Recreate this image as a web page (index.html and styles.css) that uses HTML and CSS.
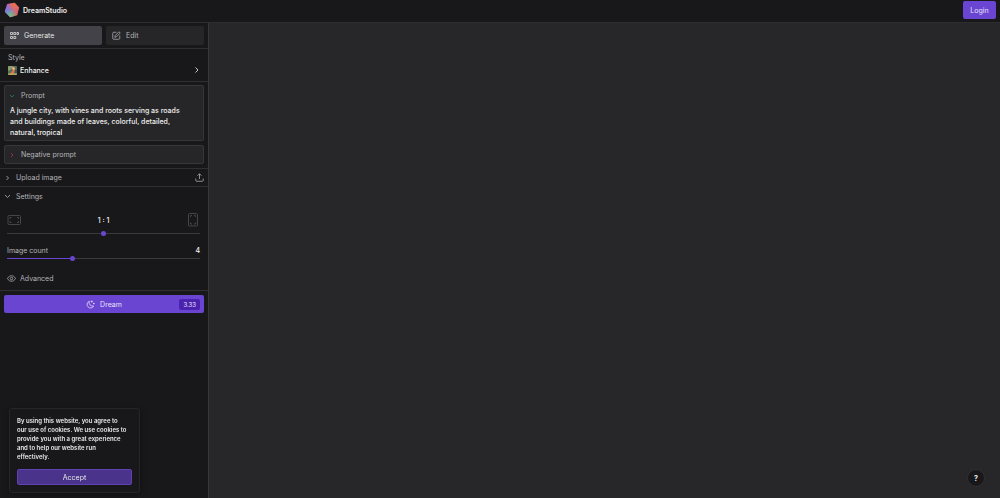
FILE: index.html
```html
<!DOCTYPE html>
<html lang="en">
<head>
    <meta charset="UTF-8">
    <meta name="viewport" content="width=device-width, initial-scale=1.0">
    <title>DreamStudio</title>
    <link rel="stylesheet" href="styles.css">
</head>
<body>
    <header class="topbar">
        <a class="brand" href="#">
            <svg class="logo" viewBox="0 0 16 16">
                <defs>
                    <linearGradient id="logo-base" x1="0" y1="0" x2="1" y2="1">
                        <stop offset="0" stop-color="#b45fc0"/>
                        <stop offset="0.5" stop-color="#c9698f"/>
                        <stop offset="1" stop-color="#f0503c"/>
                    </linearGradient>
                    <radialGradient id="logo-blue" cx="0.15" cy="0.6" r="0.6">
                        <stop offset="0" stop-color="#6f7be8"/>
                        <stop offset="1" stop-color="#6f7be8" stop-opacity="0"/>
                    </radialGradient>
                    <radialGradient id="logo-green" cx="0.4" cy="0.9" r="0.5">
                        <stop offset="0" stop-color="#6cc08a"/>
                        <stop offset="1" stop-color="#6cc08a" stop-opacity="0"/>
                    </radialGradient>
                    <radialGradient id="logo-orange" cx="0.7" cy="0.1" r="0.5">
                        <stop offset="0" stop-color="#f4703c"/>
                        <stop offset="1" stop-color="#f4703c" stop-opacity="0"/>
                    </radialGradient>
                </defs>
                <path d="M3.2 2 L10.5 .7 L15.2 5.6 L13.3 13.2 L6.2 15.3 L.8 9.8 Z" fill="url(#logo-base)"/>
                <path d="M3.2 2 L10.5 .7 L15.2 5.6 L13.3 13.2 L6.2 15.3 L.8 9.8 Z" fill="url(#logo-blue)"/>
                <path d="M3.2 2 L10.5 .7 L15.2 5.6 L13.3 13.2 L6.2 15.3 L.8 9.8 Z" fill="url(#logo-green)"/>
                <path d="M3.2 2 L10.5 .7 L15.2 5.6 L13.3 13.2 L6.2 15.3 L.8 9.8 Z" fill="url(#logo-orange)"/>
            </svg>
            DreamStudio
        </a>
        <button class="login" type="button">Login</button>
    </header>

    <div class="layout">
        <aside class="sidebar">
            <nav class="tabs">
                <button class="tab active" type="button">
                    <svg class="icon" viewBox="0 0 18 18">
                        <path d="M1 3h4v4H1zM7.500 3h4v4h-4zM1 11h4v4H1zM7.500 11h4v4h-4zM14 3h3v4h-3z"/>
                    </svg>
                    Generate
                </button>
                <button class="tab" type="button">
                    <svg class="icon" viewBox="0 0 18 18">
                        <path d="M9 2.5H3.5a2 2 0 0 0-2 2v10a2 2 0 0 0 2 2h10a2 2 0 0 0 2-2V9M14 1.5l2.500 2.500-7.500 7.500-3.500 1 1-3.500z"/>
                    </svg>
                    Edit
                </button>
            </nav>

            <section class="style-picker">
                <span class="caption" id="style-label">Style</span>
                <button class="style-button" type="button" aria-describedby="style-label">
                    <svg class="thumb" viewBox="0 0 18 18">
                        <rect width="18" height="18" rx="2" fill="#53705a"/>
                        <path d="M0 2a2 2 0 0 1 2-2h9L6 7 0 10z" fill="#8c9a72"/>
                        <path d="M9 2c5 0 6 3 5 7l-2 5-7 2c0-4 4-5 4-8z" fill="#e0713a"/>
                        <path d="M9 3h4v4H9z" fill="#f0d3ae"/>
                        <path d="M14 7h4v7h-5z" fill="#35526a"/>
                        <path d="M0 15l8-1 10 1v1a2 2 0 0 1-2 2H2a2 2 0 0 1-2-2z" fill="#b9a05a"/>
                    </svg>
                    Enhance
                    <svg class="chevron end" viewBox="0 0 8 8"><path d="M2.500 1.500L5 4 2.500 6.500"/></svg>
                </button>
            </section>

            <section class="prompts">
                <div class="prompt-box">
                    <label class="prompt-head" for="prompt">
                        <svg class="chevron green" viewBox="0 0 8 8"><path d="M1 3l2 2 2-2"/></svg>
                        Prompt
                    </label>
                    <textarea id="prompt" rows="3">A jungle city, with vines and roots serving as roads and buildings made of leaves, colorful, detailed, natural, tropical</textarea>
                </div>
                <button class="prompt-box prompt-head" type="button">
                    <svg class="chevron red" viewBox="0 0 8 8"><path d="M2 2l2 2-2 2"/></svg>
                    Negative prompt
                </button>
            </section>

            <button class="row upload" type="button">
                <svg class="chevron" viewBox="0 0 8 8"><path d="M2.500 2l2 2-2 2"/></svg>
                Upload image
                <svg class="icon end" viewBox="0 0 18 18">
                    <path d="M1.500 11v3.500a2 2 0 0 0 2 2h11a2 2 0 0 0 2-2V11M9 12V1.500M5 5.500l4-4 4 4"/>
                </svg>
            </button>

            <section class="settings">
                <button class="row" type="button">
                    <svg class="chevron" viewBox="0 0 8 8"><path d="M1 3l2.500 2.500L6 3"/></svg>
                    Settings
                </button>
                <div class="field ratio">
                    <label class="field-head" for="ratio">
                        <svg class="frame" viewBox="0 0 14 14">
                            <rect x="1" y="2.500" width="12.500" height="9" rx="1"/>
                            <path d="M3 6V4.500H4.500M10 4.500H11.500V6M11.500 8v1.500H10M4.500 9.500H3V8"/>
                        </svg>
                        <span class="value">1 : 1</span>
                        <svg class="frame" viewBox="0 0 14 14">
                            <rect x="2.500" y="0.500" width="9" height="12.500" rx="1"/>
                            <path d="M4.500 4V2.500H6M8 2.500h1.500V4M9.500 9.500V11H8M6 11H4.500V9.500"/>
                        </svg>
                    </label>
                    <input class="slider" id="ratio" type="range" min="0" max="100" value="50">
                </div>
                <div class="field">
                    <label class="field-head" for="count">Image count <span class="value">4</span></label>
                    <input class="slider filled" id="count" type="range" min="1" max="10" value="4">
                </div>
                <button class="row advanced" type="button">
                    <svg class="icon" viewBox="0 0 18 18">
                        <path d="M1 9c2-4 5-5.500 8-5.500S15 5 17 9c-2 4-5 5.500-8 5.500S3 13 1 9z"/>
                        <circle cx="9" cy="9" r="2.500"/>
                    </svg>
                    Advanced
                </button>
            </section>

            <div class="action">
                <button class="dream" type="button">
                    <svg class="icon" viewBox="0 0 18 18">
                        <path d="M6.500 2.500a7 7 0 1 0 9 9.500A7.500 7.500 0 0 1 6.500 2.500zM11.500 1v4M9.500 3h4M15.500 5.500v3M14 7h3"/>
                    </svg>
                    Dream
                    <span class="cost">3.33</span>
                </button>
            </div>
        </aside>

        <main class="canvas"></main>
    </div>

    <div class="cookies">
        <p>By using this website, you agree to our use of cookies. We use cookies to provide you with a great experience and to help our website run effectively.</p>
        <button class="accept" type="button">Accept</button>
    </div>

    <button class="help" type="button">?</button>
</body>
</html>
```
FILE: styles.css
```css
* {
    box-sizing: border-box;
}
body {
    display: flex;
    flex-direction: column;
    min-height: 100vh;
    margin: 0;
    background: #18181a;
    color: #b4b4b8;
    font-family: Inter, sans-serif;
    font-size: 7px;
    line-height: 11px;
}
button,
textarea {
    font: inherit;
    color: inherit;
    background: none;
    border: 0;
    margin: 0;
    padding: 0;
}
button {
    cursor: pointer;
}
svg {
    display: block;
    flex: none;
    fill: none;
    stroke: currentColor;
}
.icon {
    width: 9px;
    height: 9px;
    stroke-width: 1.5;
}
.chevron {
    width: 8px;
    height: 8px;
    stroke-width: 0.8;
}
.end {
    margin-left: auto;
}

/* header */
.topbar {
    display: flex;
    align-items: center;
    justify-content: space-between;
    height: 23px;
    padding: 0 4px 2px;
    border-bottom: 1px solid #2e2e31;
}
.brand {
    display: flex;
    align-items: center;
    gap: 3px;
    color: #f0f0f0;
    font-weight: 600;
    text-decoration: none;
}
.logo {
    width: 16px;
    height: 16px;
    stroke: none;
}
.login {
    min-width: 33px;
    height: 18px;
    border-radius: 2px;
    background: #6a45d2;
    color: #e8e2fa;
}

/* sidebar */
.layout {
    display: flex;
    flex: 1;
}
.sidebar {
    width: 209px;
    border-right: 1px solid #37373a;
}
.canvas {
    flex: 1;
    background: #272729;
}
.tabs {
    display: flex;
    gap: 4px;
    padding: 3px 4px;
    border-bottom: 1px solid #303033;
}
.tab {
    display: flex;
    flex: 1;
    align-items: center;
    gap: 5px;
    height: 19px;
    padding: 0 6px;
    border-radius: 2px;
    background: #262628;
}
.tab.active {
    background: #424248;
    color: #e4e4e6;
}
.style-picker {
    padding: 3px 7px 4px 8px;
    border-bottom: 1px solid #303033;
}
.caption {
    display: block;
}
.style-button {
    display: flex;
    align-items: center;
    gap: 3px;
    width: 100%;
    height: 14px;
    color: #f4f4f4;
    font-weight: 500;
}
.thumb {
    width: 9px;
    height: 9px;
    stroke: none;
}
.prompts {
    display: flex;
    flex-direction: column;
    gap: 4px;
    padding: 3px 4px 4px;
    border-bottom: 1px solid #303033;
}
.prompt-box {
    border: 1px solid #37373a;
    border-radius: 2px;
    background: #262628;
}
.prompt-head {
    display: flex;
    align-items: center;
    gap: 4px;
    height: 19px;
    padding: 0 4px;
}
.prompt-box textarea {
    display: block;
    width: 100%;
    padding: 0 12px 0 5px;
    margin-bottom: 2px;
    color: #f0f0f0;
    font-weight: 500;
    resize: none;
    overflow: hidden;
}
.green {
    color: #1f8a55;
}
.red {
    color: #a33a44;
}

.row {
    display: flex;
    align-items: center;
    gap: 4px;
    width: 100%;
    height: 18px;
    padding: 0 4px;
}
.upload {
    border-bottom: 1px solid #303033;
}
.settings {
    padding-bottom: 3px;
    border-bottom: 1px solid #303033;
}
.field {
    padding: 5px 8px 0 7px;
}
.field-head {
    display: flex;
    align-items: center;
    justify-content: space-between;
}
.value {
    color: #f4f4f4;
    font-weight: 500;
}
.frame {
    width: 14px;
    height: 14px;
    color: #454549;
}
.slider {
    display: block;
    width: 100%;
    height: 5px;
    margin: 0;
    appearance: none;
    background: linear-gradient(#3a3a3d, #3a3a3d) center / 100% 1px no-repeat;
}
.slider::-webkit-slider-thumb {
    appearance: none;
    width: 5px;
    height: 5px;
    border-radius: 50%;
    background: #6a45d2;
}
.slider.filled {
    background: linear-gradient(90deg, #6a45d2 34%, #3a3a3d 34%) center / 100% 1px no-repeat;
}
.ratio {
    padding-top: 8px;
}
.ratio .field-head {
    padding-bottom: 4px;
}
.ratio + .field {
    padding-top: 9px;
}
.advanced {
    margin-top: 8px;
    padding: 0 7px;
}
.action {
    padding: 4px;
}
.dream {
    display: flex;
    align-items: center;
    justify-content: center;
    gap: 5px;
    position: relative;
    width: 100%;
    height: 18px;
    border-radius: 2px;
    background: #6a45d2;
    color: #e8e2fa;
}
.cost {
    position: absolute;
    right: 4px;
    padding: 0 4px;
    border-radius: 2px;
    background: #4b22b0;
    font-size: 6px;
}

/* overlays */
.cookies {
    position: fixed;
    left: 9px;
    bottom: 5px;
    width: 131px;
    padding: 7px;
    border: 1px solid #262629;
    border-radius: 3px;
    background: #18181a;
    box-shadow: 0 2px 6px rgba(0, 0, 0, 0.3);
    color: #e8e8e8;
}
.cookies p {
    margin: 0 0 8px;
    padding-right: 5px;
    font-size: 6px;
    font-weight: 600;
    line-height: 9px;
}
.accept {
    width: 100%;
    height: 16px;
    border: 1px solid #5f41b4;
    border-radius: 2px;
    background: #4a338a;
}
.help {
    position: fixed;
    right: 15px;
    bottom: 11px;
    width: 18px;
    height: 18px;
    border: 1px solid #303033;
    border-radius: 50%;
    background: #18181a;
    color: #f4f4f4;
    font-weight: 700;
}
```
